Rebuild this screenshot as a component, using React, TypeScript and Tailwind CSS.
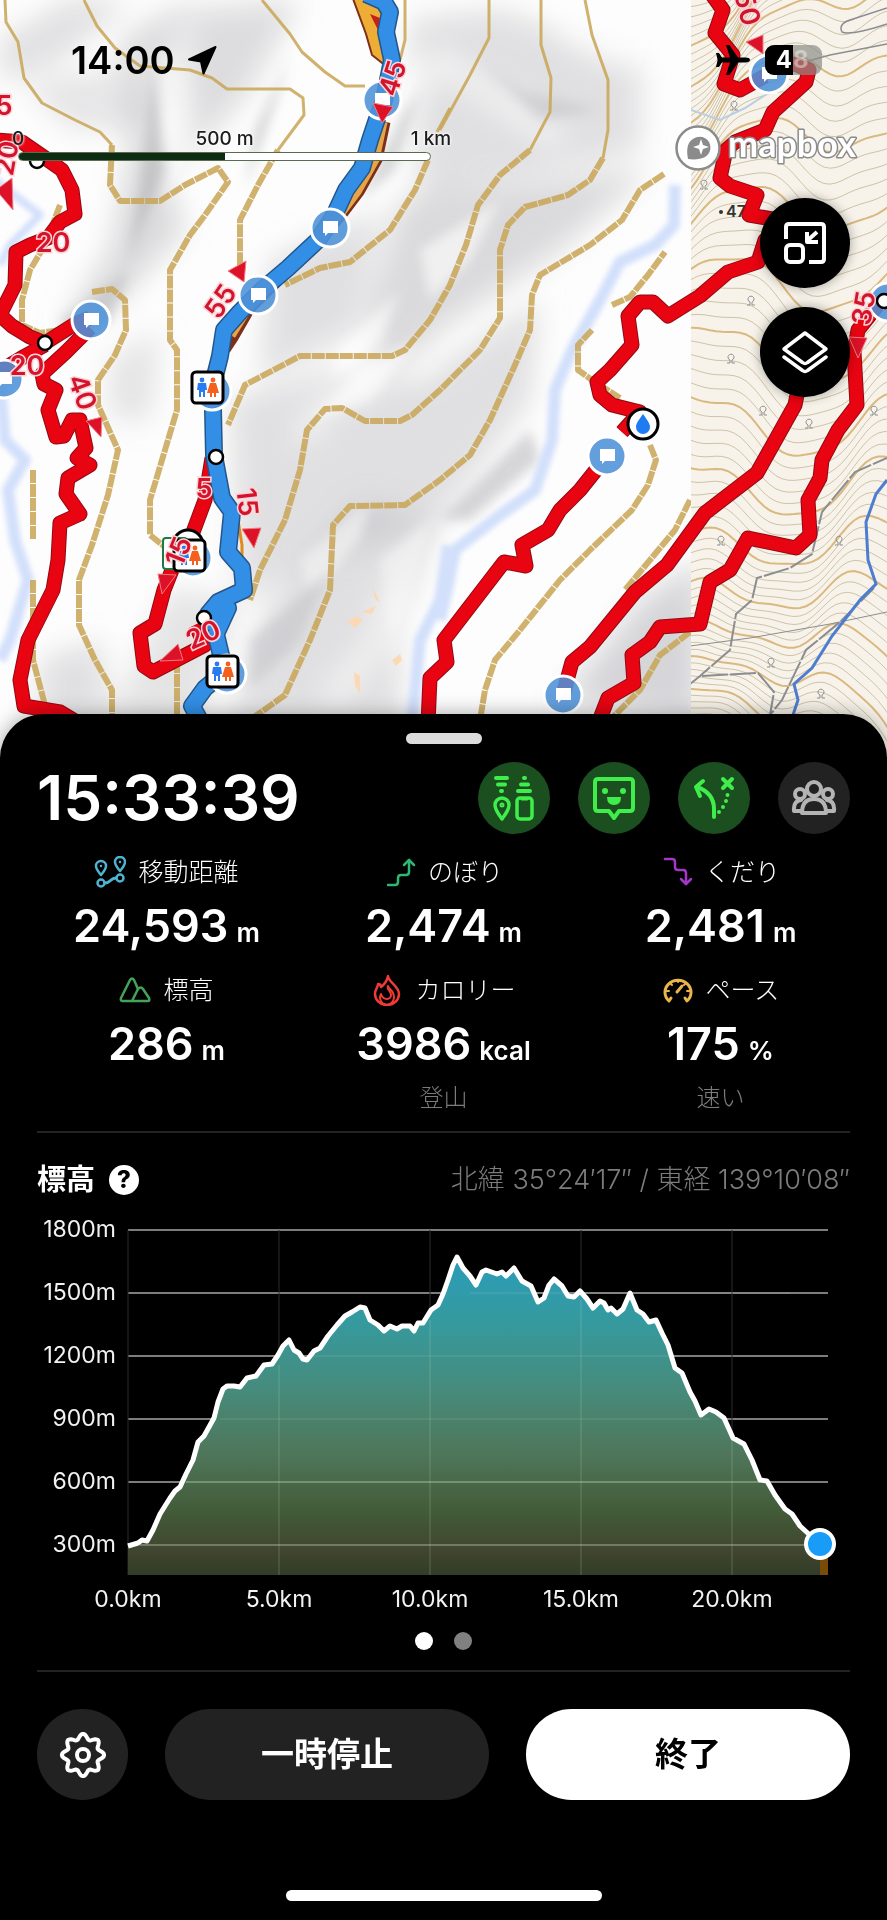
import React, { useState } from "react";

const RED = "#e90412";
const RED_EDGE = "#8f0a14";
const TAN = "#c8a455";

// ---------- map data ----------

const shades = [
  { d: "M120 40 L190 0 L150 130 L185 230 L120 300 L60 330 L110 250 L130 150 Z", o: 0.45 },
  { d: "M190 10 L300 0 L250 90 L180 170 Z", o: 0.4 },
  { d: "M410 20 L500 10 L640 60 L640 150 L560 170 L420 200 Z", o: 0.36 },
  { d: "M400 200 L560 180 L650 170 L560 250 L440 330 L380 400 L370 300 Z", o: 0.45 },
  { d: "M270 260 L380 210 L360 330 L260 380 Z", o: 0.35 },
  { d: "M230 400 L330 370 L420 380 L540 300 L530 400 L440 520 L330 560 L240 600 Z", o: 0.36 },
  { d: "M270 600 L360 500 L440 520 L400 620 L400 720 L230 720 Z", o: 0.36 },
  { d: "M170 590 L240 600 L200 720 L110 720 Z", o: 0.3 },
  { d: "M40 660 L100 640 L110 720 L40 720 Z", o: 0.35 },
  { d: "M560 700 L640 600 L700 560 L700 720 Z", o: 0.5 },
  { d: "M0 40 L70 0 L130 0 L60 60 L0 80 Z", o: 0.35 },
  { d: "M20 80 L120 70 L150 130 L70 130 Z", o: 0.25 },
  { d: "M110 360 L160 330 L150 420 L110 420 Z", o: 0.3 },
];

const ridges = [
  "M150 60 L185 120 L165 180",
  "M400 110 L440 60 L560 140",
  "M300 440 L330 400 L430 360",
  "M330 700 L380 640 L390 590",
  "M560 30 L620 60 L680 20",
];

// narrow folds drawn sharper than the broad shading
const folds = [
  { d: "M290 60 L255 130 L245 190 L262 140 Z", c: "#b4b4b8" },
  { d: "M152 60 L140 190 L128 260 L165 170 Z", c: "#b0b0b4" },
  { d: "M360 200 L400 120 L420 90 L395 170 Z", c: "#bcbcc0" },
  { d: "M480 60 L520 90 L600 110 L540 120 Z", c: "#c4c4c8" },
  { d: "M420 250 L500 200 L470 260 L430 300 Z", c: "#ffffff" },
  { d: "M340 350 L400 290 L380 340 L330 380 Z", c: "#ffffff" },
  { d: "M310 420 L360 370 L420 340 L370 400 Z", c: "#ffffff" },
  { d: "M440 520 L530 430 L540 460 L470 520 Z", c: "#bcbcc0" },
  { d: "M300 560 L370 500 L360 540 L310 600 Z", c: "#f8f8f8" },
  { d: "M250 640 L330 570 L300 640 L250 690 Z", c: "#c4c4c8" },
  { d: "M380 560 L430 520 L410 600 L390 640 Z", c: "#f8f8f8" },
  { d: "M60 320 L130 270 L110 320 L70 340 Z", c: "#b8b8bc" },
];

const thinContours = [
  "M5 0 L6 22 L18 42 L24 78 L42 103 L75 120 L100 132 L112 145",
  "M84 0 L97 26 L115 48 L140 66 L190 70 L212 78 L227 89 L290 89 L303 98 L304 115 L278 150",
  "M262 0 L290 34 L302 52 L325 72 L345 86 L365 86",
  "M405 0 L405 40 L400 60",
  "M489 0 L489 38 L470 75 L440 130",
  "M541 0 L541 45 L551 78 L550 112 L530 150",
  "M585 0 L592 35 L608 80 L608 130 L603 158",
  "M450 108 L437 132",
];

const thickContours = [
  "M112 145 L110 185 L120 201 L160 201 L185 185 L218 168 L228 182 L205 215 L190 235 L170 270 L170 340 L177 350 L177 410 L165 450 L150 500 L150 535 L175 555",
  "M278 150 L258 185 L240 220 L240 265",
  "M530 150 L500 175 L478 205 L466 245 L450 285 L430 320 L405 350 L392 356 L300 356 L245 385 L228 425",
  "M603 158 L590 180 L568 195 L525 207 L508 225 L500 250 L500 318 L480 350 L440 390 L412 415 L400 421 L365 421 L342 408 L325 409 L307 430 L300 470 L285 520 L260 570 L250 600",
  "M664 174 L640 190 L622 220 L590 245 L565 260 L540 275 L532 295 L530 330 L515 365 L490 420 L470 455 L440 480 L405 505 L350 506 L333 525 L330 590 L310 640 L285 695 L250 720",
  "M428 160 L415 190 L390 230 L350 262 L320 268 L285 285",
  "M612 305 L630 297 L648 275 L665 252",
  "M592 330 L578 345 L578 370 L592 380 L620 398",
  "M650 445 L656 460 L648 485 L632 510 L590 550 L560 580 L520 630 L495 660 L485 690 L480 720",
  "M690 500 L675 530 L650 560 L625 590",
  "M690 632 L660 655 L640 690 L610 720",
  "M60 205 L45 245 L30 270 L22 300 L22 325 L40 333 L60 330",
  "M92 292 L112 289 L125 300 L126 330 L115 355 L98 380 L98 405 L118 450 L108 495 L92 545 L79 580 L79 625 L95 660 L112 690 L112 720",
  "M33 470 L33 540",
  "M33 580 L33 660 L45 705",
  "M177 660 L177 720",
];

const streams = [
  { d: "M675 185 L674 225 L655 245 L620 262 L600 300 L572 350 L555 390 L552 440 L535 490 L500 515 L455 550 L447 590 L440 620", w: 12 },
  { d: "M448 545 L440 600 L420 640 L412 720", w: 12 },
  { d: "M-5 180 L40 215 L10 245 L0 265", w: 8 },
  { d: "M0 385 L5 440 L25 460 L8 490 L15 540 L28 580 L10 640 L0 660", w: 12 },
];

const trails = [
  "M-5 140 L22 142 L48 160 L62 170 L72 190 L75 214 L60 222 L48 238 L30 245 L16 252 L15 285 L0 315 L12 326 L30 337 L45 343 L75 324 L90 318",
  "M-5 374 L25 356 L45 345",
  "M90 328 L66 352 L42 374 L44 384 L56 390 L48 410 L56 437 L64 436 L72 420 L80 420 L86 448 L77 458 L90 465 L68 478 L66 494 L80 514 L60 523 L58 560 L53 590 L28 640 L20 680 L24 706 L60 712 L80 724",
  "M212 458 L205 500 L192 535",
  "M172 570 L164 590 L155 624 L140 633 L144 666 L153 672 L205 645 L195 625",
  "M710 -8 L723 10 L715 33 L733 55 L724 84 L740 90 L765 76",
  "M782 64 L795 64 L809 70 L806 82 L773 112 L765 130 L735 142 L726 150 L720 178 L730 186 L757 195 L749 215 L790 222 L765 240 L758 262 L728 272 L700 296 L668 316 L653 302 L640 302 L628 316 L632 345 L610 370 L597 382 L600 395 L612 405 L640 412 L622 432",
  "M596 470 L580 490 L560 510 L548 530 L522 545 L526 566 L504 562 L444 640 L447 662 L430 678 L428 724",
  "M800 380 L795 405 L757 473 L705 513 L667 565 L635 592 L590 647 L572 662 L563 695",
  "M882 300 L858 330 L854 352 L857 405 L838 430 L822 460 L820 478 L808 500 L810 535 L796 548 L748 538 L730 570 L710 582 L700 624 L660 627 L650 642 L632 655 L634 683 L608 698 L598 724",
];

const route =
  "M366 -6 L384 2 L390 12 L386 32 L392 60 L384 100 L376 122 L370 140 L362 168 L346 190 L334 216 L318 240 L288 268 L262 290 L240 312 L224 330 L220 356 L212 388 L213 410 L214 455 L222 498 L232 512 L228 552 L242 568 L244 590 L218 602 L208 614 L208 622 L228 608 L216 634 L225 672 L205 688 L192 706 L202 724";

const speechPins = [
  [382, 100], [330, 228], [258, 295], [91, 320], [212, 391], [193, 558],
  [227, 674], [769, 74], [607, 456], [563, 695], [4, 379], [888, 302],
];

const waypoints = [
  [37, 161], [45, 343], [216, 457], [204, 618], [884, 301],
];

const restrooms = [
  [207, 387], [189, 555], [222, 671],
];

const times = [
  { t: "45", x: 392, y: 78, r: -72 },
  { t: "55", x: 220, y: 301, r: -56 },
  { t: "20", x: 53, y: 242, r: 0 },
  { t: "5", x: 4, y: 105, r: 0 },
  { t: "20", x: 6, y: 158, r: -80 },
  { t: "20", x: 27, y: 365, r: 0 },
  { t: "40", x: 83, y: 392, r: 70 },
  { t: "5", x: 204, y: 488, r: 0 },
  { t: "15", x: 248, y: 502, r: 84 },
  { t: "15", x: 178, y: 551, r: -68 },
  { t: "20", x: 203, y: 634, r: -24 },
  { t: "50", x: 748, y: 8, r: 76 },
  { t: "35", x: 863, y: 308, r: -80 },
];

const arrows = [
  "373,103 393,107 382,123",
  "228,271 246,261 244,282",
  "86,421 102,417 101,437",
  "242,529 261,528 254,548",
  "158,574 176,575 162,594",
  "160,661 178,644 183,660",
  "746,42 763,35 763,54",
  "849,337 867,338 858,358",
  "-4,190 12,178 13,210",
];

const trees = [
  [733, 105], [730, 358], [762, 410], [808, 423], [703, 184], [720, 540],
  [838, 540], [770, 662], [820, 693], [750, 300], [873, 410],
];

// stacked wavy lines standing for the printed topo sheet
const topoLines = (() => {
  const out: { d: string; bold: boolean }[] = [];
  for (let i = 0; i < 104; i++) {
    const base = -150 + i * 10;
    let d = "";
    for (let x = 686; x <= 892; x += 6) {
      const u = x - 686;
      const y =
        base +
        Math.sin(u / 24 + i * 0.05) * 15 +
        Math.sin(u / 61 + i * 0.11) * 38 +
        Math.sin(u / 11 + i * 0.22) * 4 -
        u * 0.5 * Math.sin(i / 17);
      d += `${d ? "L" : "M"}${x} ${y.toFixed(1)}`;
    }
    out.push({ d, bold: i % 5 === 0 });
  }
  return out;
})();

const SpeechPin = ({ x, y }: { x: number; y: number }) => (
  <g>
    <circle cx={x} cy={y} r={19} fill="#4f92d8" fillOpacity={0.88} stroke="#fff" strokeWidth={3} />
    <path d={`M${x - 7} ${y - 7}h15v12h-10l-3 3v-3h-2z`} fill="#fff" />
  </g>
);

const Restroom = ({ x, y }: { x: number; y: number }) => (
  <g>
    <rect x={x - 15} y={y - 15} width={31} height={31} rx={4} fill="#fff" stroke="#000" strokeWidth={3} />
    <g fill="#2b7bf0">
      <circle cx={x - 5} cy={y - 7} r={2.4} />
      <path d={`M${x - 9} ${y - 4}h8l1 7h-2v7h-2v-5h-2v5h-2v-7h-2z`} />
    </g>
    <g fill="#f4601d">
      <circle cx={x + 6} cy={y - 7} r={2.4} />
      <path d={`M${x + 3} ${y - 4}h6l3 10h-3v4h-2v-4h-2v4h-2v-4h-3z`} />
    </g>
  </g>
);

const TrailMap = () => (
  <svg
    viewBox="0 0 887 760"
    preserveAspectRatio="xMidYMin slice"
    className="absolute inset-0 w-full h-full"
    role="img"
    aria-label="登山地図"
  >
    <defs>
      <filter id="soft" x="-20%" y="-20%" width="140%" height="140%">
        <feGaussianBlur stdDeviation="14" />
      </filter>
      <filter id="fold" x="-20%" y="-20%" width="140%" height="140%">
        <feGaussianBlur stdDeviation="6" />
      </filter>
      <filter id="water" x="-20%" y="-20%" width="140%" height="140%">
        <feGaussianBlur stdDeviation="2.5" />
      </filter>
      <clipPath id="sheet">
        <rect x="691" y="0" width="196" height="760" />
      </clipPath>
      <clipPath id="plain">
        <rect x="0" y="0" width="691" height="760" />
      </clipPath>
    </defs>

    <rect width="887" height="760" fill="#fdfdfd" />
    <g clipPath="url(#plain)">
      <g filter="url(#soft)">
        {shades.map((s) => (
          <path key={s.d} d={s.d} fill="#bdbdc1" opacity={s.o + 0.1} />
        ))}
        {ridges.map((d) => (
          <path key={d} d={d} fill="none" stroke="#fff" strokeWidth={14} opacity={0.8} />
        ))}
      </g>
      <g filter="url(#fold)" opacity={0.6}>
        {folds.map((f) => (
          <path key={f.d} d={f.d} fill={f.c} />
        ))}
      </g>
      <g fill="none" stroke="#d3e0fb" filter="url(#water)" strokeLinejoin="round">
        {streams.map((s) => (
          <path key={s.d} d={s.d} strokeWidth={s.w} />
        ))}
      </g>
      <g fill="none" stroke={TAN} strokeLinejoin="round">
        {thinContours.map((d) => (
          <path key={d} d={d} strokeWidth={3} opacity={0.85} />
        ))}
        {thickContours.map((d) => (
          <path key={d} d={d} strokeWidth={6} strokeDasharray="13 1" opacity={0.85} />
        ))}
      </g>
      <g fill="#fbd9b5">
        <path d="M347 622l10-6 6 4-8 8zM362 612l14-6-4 8zM372 588l4 6 4 8-5-3zM392 660l8-6 2 6-6 6zM354 672l6 4 0 18-5-8z" />
      </g>
    </g>

    {/* printed topo sheet on the right */}
    <g clipPath="url(#sheet)">
      <rect x="691" width="196" height="760" fill="#f7f3ea" />
      {topoLines.map((l) => (
        <path
          key={l.d}
          d={l.d}
          fill="none"
          stroke={l.bold ? "#dab981" : "#cfc4a8"}
          strokeWidth={l.bold ? 2 : 1}
        />
      ))}
      <g fill="none" stroke="#8b8d90" strokeWidth={2}>
        <path d="M887 8 L850 20 Q838 24 842 32 Q850 36 887 24" strokeWidth={1.5} />
        <path d="M887 44 L830 55 L790 66" strokeWidth={1.5} />
        <path d="M690 646 L750 638 L830 624 L887 612" strokeWidth={1} />
        <path d="M690 684 L700 676 L730 650 L736 614 L752 600 L757 578 L790 568 L812 554 L822 512 L855 472 L887 458" strokeDasharray="26 2" />
        <path d="M702 676 L758 673 L774 692 L770 715 L782 700 L806 650 L840 622 L874 588" strokeDasharray="26 2" />
      </g>
      <path d="M887 480 L876 494 L866 522 L868 560 L876 584 L860 600 L832 636 L812 668 L794 684 L798 700 L790 724" fill="none" stroke="#4e7dd0" strokeWidth={3} />
      <path d="M691 110 L720 120 L745 108 L770 92" fill="none" stroke="#b9cfe4" strokeWidth={2} />
      <g fill="none" stroke="#8f8f8f" strokeWidth={1}>
        {trees.map(([x, y]) => (
          <path key={`${x}-${y}`} d={`M${x - 3} ${y + 5}h3v-3a3 3 0 1 1 2 0v3h3`} />
        ))}
      </g>
      <circle cx="721" cy="212" r="2" fill="#333" />
      <text x="726" y="217" fontSize="16" fontWeight="600" fill="#333">47</text>
    </g>

    <g fill="none" strokeLinejoin="round">
      {trails.map((d) => (
        <path key={d} d={d} stroke={RED_EDGE} strokeWidth={15} />
      ))}
      {trails.map((d) => (
        <path key={d} d={d} stroke={RED} strokeWidth={13} />
      ))}
    </g>

    {/* planned course under the walked track */}
    <path d="M352 -4 L366 34 L372 55 L386 66 L382 -4 Z" fill="#eeae35" stroke="#7d3018" strokeWidth={2} />
    <path d="M370 14 L380 18 L378 30 Z" fill="#c22218" />
    <path
      d="M386 122 L378 160 L360 192 L342 216 L318 244 L280 280 L250 310 L234 338 L226 350"
      fill="none"
      stroke="#7d3018"
      strokeWidth={9}
    />
    <path
      d="M384 122 L376 160 L358 192 L340 216 L316 244 L278 280 L248 310 L232 336"
      fill="none"
      stroke="#e8a548"
      strokeWidth={7}
    />
    <path d="M238 520 L242 545 L242 562" fill="none" stroke="#e08a1c" strokeWidth={3} />
    <path d={route} fill="none" stroke="#22568c" strokeWidth={18} strokeLinejoin="round" />
    <path d={route} fill="none" stroke="#338fe6" strokeWidth={15} strokeLinejoin="round" />

    {speechPins.map(([x, y]) => (
      <SpeechPin key={`${x}-${y}`} x={x} y={y} />
    ))}
    {waypoints.map(([x, y]) => (
      <circle key={`${x}-${y}`} cx={x} cy={y} r={7} fill="#fff" stroke="#000" strokeWidth={2.5} />
    ))}
    <circle cx={188} cy={545} r={15} fill="#fff" stroke="#000" strokeWidth={3} />
    <rect x={163} y={538} width={24} height={31} rx={3} fill="#fff" stroke="#1d7a45" strokeWidth={2} />
    {restrooms.map(([x, y]) => (
      <Restroom key={`${x}-${y}`} x={x} y={y} />
    ))}
    <circle cx={643} cy={424} r={15} fill="#fff" stroke="#000" strokeWidth={3} />
    <path d="M643 414c4 6 7 9 7 13a7 7 0 0 1-14 0c0-4 3-7 7-13z" fill="#1f7bf2" />

    {arrows.map((p) => (
      <polygon key={p} points={p} fill="#dc1228" stroke="#f27c84" strokeWidth={1} />
    ))}
    <g fontSize={27} fontWeight={600} textAnchor="middle" fill="#d4142c" stroke="#fbd5d8" strokeWidth={3} paintOrder="stroke">
      {times.map((m) => (
        <text key={`${m.t}-${m.x}-${m.y}`} x={m.x} y={m.y + 10} transform={`rotate(${m.r} ${m.x} ${m.y})`}>
          {m.t}
        </text>
      ))}
    </g>
  </svg>
);

const StatusBar = () => (
  <div className="flex h-11 items-center justify-between pl-[71px] pr-[65px]">
    <div className="flex items-center gap-3 text-black">
      <span className="text-[38px] leading-[44px] font-semibold">14:00</span>
      <svg viewBox="0 0 30 30" className="w-[30px] h-[30px]" fill="#000" stroke="#000" strokeWidth="2" strokeLinejoin="round">
        <path d="M2 14.500L28.500 2 16.500 28.500 14 16.500z" />
      </svg>
    </div>
    <div className="flex items-center gap-[14px]">
      <svg viewBox="0 0 36 32" className="w-9 h-8" fill="#000">
        <path d="M35 16c0-1.600-2-2.400-4.500-2.400H23L14.500 1H11l4 12.600H7L4 9H1l1.600 7L1 23h3l3-4.600h8L11 31h3.500L23 18.400h7.500C33 18.400 35 17.600 35 16z" />
      </svg>
      <div className="flex h-[30px] w-[57px] overflow-hidden rounded-[9px] bg-[#8c8c86]/70 text-[24px] leading-[30px] font-bold">
        <span className="w-7 bg-black pr-[1px] text-right text-white">4</span>
        <span className="text-white/40">8</span>
      </div>
    </div>
  </div>
);

const ScaleBar = () => (
  <div className="ml-[18px] w-[413px] [text-shadow:0_0_3px_#fff,0_0_3px_#fff]">
    <div className="flex justify-between text-[19px] leading-6 font-medium text-[#1c1c1c] whitespace-nowrap">
      <span className="flex w-0 justify-center">0</span>
      <span className="flex w-0 justify-center">500 m</span>
      <span className="flex w-0 justify-center">1 km</span>
    </div>
    <div className="mt-[1px] h-[9px] rounded-full border border-[#5b6b4f] bg-white">
      <div className="h-full w-1/2 rounded-l-full bg-[#0e2c12]" />
    </div>
  </div>
);

const MapboxLogo = () => (
  <a href="#mapbox" className="mr-5 flex items-center gap-1" aria-label="mapbox">
    <svg viewBox="0 0 46 46" className="w-[46px] h-[46px]">
      <circle cx="23" cy="23" r="21.500" fill="#fff" stroke="#8b8b8b" strokeWidth="2.500" />
      <path d="M13 34c-2-11 0-17 5-20 6-4 13-2 16 3 3 6 1 12-4 15-4 2-10 3-17 2z" fill="#8b8b8b" />
      <path d="M26 14l2 6 6 2-6 2-2 6-2-6-6-2 6-2z" fill="#fff" />
    </svg>
    <svg viewBox="0 0 142 50" className="h-[50px] w-[142px]">
      <text x="3" y="34" fontSize="36" fontWeight="700" fill="#fff" stroke="#8b8b8b" strokeWidth="3" paintOrder="stroke" strokeLinejoin="round" className="font-['Lato',sans-serif]">
        mapbox
      </text>
    </svg>
  </a>
);

const roundButton =
  "flex h-[90px] w-[90px] items-center justify-center rounded-full bg-black text-white shadow-[0_0_12px_rgba(0,0,0,0.35)]";

const MapButtons = () => (
  <div className="mt-[25px] flex flex-col items-end gap-[19px] pr-[37px]">
    <button type="button" aria-label="縮小表示" className={roundButton}>
      <svg viewBox="0 0 44 44" className="w-11 h-11" fill="none" stroke="currentColor" strokeWidth="4" strokeLinejoin="round">
        <path d="M3 18V6q0-3 3-3h32q3 0 3 3v32q0 3-3 3H26" />
        <rect x="3" y="24" width="17" height="17" rx="4" />
        <path d="M34 11l-9 8" />
        <path d="M24 11v10h11" />
      </svg>
    </button>
    <button type="button" aria-label="レイヤー" className={roundButton}>
      <svg viewBox="0 0 48 44" className="w-12 h-11" fill="none" stroke="currentColor" strokeWidth="3.500" strokeLinejoin="round" strokeLinecap="round">
        <path d="M24 3l21 16-18.500 13.500q-2.500 2-5 0L3 19z" />
        <path d="M3 27l18.500 13.500q2.500 2 5 0L45 27" />
      </svg>
    </button>
  </div>
);

// ---------- sheet ----------

const BeaconIcon = () => (
  <svg viewBox="0 0 44 48" className="w-11 h-12" fill="none" stroke="currentColor" strokeWidth="4" strokeLinecap="round" strokeLinejoin="round">
    <path d="M4 4h11M6 10.500h7M9 17h1M32 4h1M29 10.500h7M26 17h12" />
    <path d="M10 45c-4-6-7-9-7-14a7 7 0 0 1 14 0c0 5-3 8-7 14z" strokeWidth="3.500" />
    <circle cx="10" cy="31" r="1.500" strokeWidth="2" />
    <rect x="25" y="24" width="15" height="21" rx="3" strokeWidth="3.500" />
    <path d="M30 25h5" strokeWidth="3" />
  </svg>
);

const SmileIcon = () => (
  <svg viewBox="0 0 44 46" className="w-11 h-[46px]" fill="none" stroke="currentColor" strokeWidth="4" strokeLinecap="round" strokeLinejoin="round">
    <path d="M6 4h32q3 0 3 3v26q0 3-3 3H27l-5 7-5-7H6q-3 0-3-3V7q0-3 3-3z" />
    <circle cx="13" cy="16" r="3" fill="currentColor" stroke="none" />
    <circle cx="31" cy="16" r="3" fill="currentColor" stroke="none" />
    <path d="M15 22h14q0 8-7 8t-7-8z" fill="currentColor" stroke="none" />
  </svg>
);

const CourseIcon = () => (
  <svg viewBox="0 0 44 46" className="w-11 h-[46px]" fill="none" stroke="currentColor" strokeWidth="4" strokeLinecap="round" strokeLinejoin="round">
    <path d="M22 42V34q0-16-17-22" />
    <path d="M11 6l-7 6 4 9" />
    <path d="M31 4l9 9M40 4l-9 9" />
    <path d="M35.500 20v0M34 26v0M31 32v0M27 37v0" />
  </svg>
);

const GroupIcon = () => (
  <svg viewBox="0 0 46 36" className="w-[46px] h-9" fill="none" stroke="currentColor" strokeWidth="4" strokeLinecap="round" strokeLinejoin="round">
    <circle cx="9" cy="14" r="5" />
    <circle cx="37" cy="14" r="5" />
    <path d="M10 31H3q-1-10 7-11M36 31h7q1-10-7-11" />
    <circle cx="23" cy="9" r="7" />
    <path d="M11 33q0-14 12-14t12 14z" />
  </svg>
);

const RouteIcon = () => (
  <svg viewBox="0 0 32 32" className="w-8 h-8 text-[#4fb3cf]" fill="none" stroke="currentColor" strokeWidth="2.500" strokeLinecap="round" strokeLinejoin="round">
    <path d="M7 19c-3-4-5-6-5-9a5 5 0 0 1 10 0c0 3-2 5-5 9zM26 15c-3-4-5-6-5-9a5 5 0 0 1 10 0c0 3-2 5-5 9z" />
    <path d="M7 10v0M26 6v0" />
    <circle cx="7" cy="27" r="3.500" />
    <circle cx="26" cy="22" r="3.500" />
    <path d="M11 27c6 0 5-5 11-5" strokeWidth="3" />
  </svg>
);

const ClimbIcon = () => (
  <svg viewBox="0 0 32 32" className="w-8 h-8 text-[#2fb673]" fill="none" stroke="currentColor" strokeWidth="2.500" strokeLinecap="round" strokeLinejoin="round">
    <path d="M4 29h7q3 0 3-3v-4q0-3 3-3h5q3 0 3-3V4" />
    <path d="M20 9l5-5 5 5" />
  </svg>
);

const DescentIcon = () => (
  <svg viewBox="0 0 32 32" className="w-8 h-8 text-[#a436c8]" fill="none" stroke="currentColor" strokeWidth="2.500" strokeLinecap="round" strokeLinejoin="round">
    <path d="M4 3h7q3 0 3 3v5q0 3 3 3h5q3 0 3 3v11" />
    <path d="M20 23l5 5 5-5" />
  </svg>
);

const MountainIcon = () => (
  <svg viewBox="0 0 32 32" className="w-8 h-8 text-[#43a35b]" fill="none" stroke="currentColor" strokeWidth="2.500" strokeLinecap="round" strokeLinejoin="round">
    <path d="M4 27q-3 0-2-3L11 6q2-3 4 0l4 9q3-3 5 0l6 9q1 3-1 3z" />
    <path d="M19 15l-6 12" />
  </svg>
);

const FlameIcon = () => (
  <svg viewBox="0 0 32 32" className="w-8 h-8 text-[#f03a36]" fill="none" stroke="currentColor" strokeWidth="2.500" strokeLinecap="round" strokeLinejoin="round">
    <path d="M17 2c0 6 11 10 11 18a12 11 0 0 1-24 0c0-5 3-6 3-10 2 0 3 1 3 3 4-3 6-6 7-11z" />
    <path d="M17 12c-2 3 3 5 3 9a4 4 0 0 1-4 4c-3 0-5-2-6-5-3 6 2 11 6 11s9-5 6-12c-1-3-4-4-5-7z" strokeWidth="2" />
  </svg>
);

const GaugeIcon = () => (
  <svg viewBox="0 0 32 32" className="w-8 h-8 text-[#eab54a]" fill="none" stroke="currentColor" strokeWidth="3" strokeLinecap="round" strokeLinejoin="round">
    <path d="M7 27a13 12 0 1 1 18 0l-2-3M7 27l2-3" />
    <path d="M15 18l5-6" />
    <path d="M4 17h3M28 17h-3M8 9l2 2M24 9l-2 2M16 6v2" strokeWidth="2" />
  </svg>
);

const toggles = [
  { label: "みまもり", icon: BeaconIcon, on: true },
  { label: "あいさつ", icon: SmileIcon, on: true },
  { label: "ルート外れ警告", icon: CourseIcon, on: true },
  { label: "グループ", icon: GroupIcon, on: false },
];

const stats = [
  { icon: RouteIcon, label: "移動距離", value: "24,593", unit: "m" },
  { icon: ClimbIcon, label: "のぼり", value: "2,474", unit: "m" },
  { icon: DescentIcon, label: "くだり", value: "2,481", unit: "m" },
  { icon: MountainIcon, label: "標高", value: "286", unit: "m" },
  { icon: FlameIcon, label: "カロリー", value: "3986", unit: "kcal", note: "登山" },
  { icon: GaugeIcon, label: "ペース", value: "175", unit: "%", note: "速い" },
];

const profile =
  "128,1546 138,1543 142,1540 147,1541 153,1530 160,1514 170,1498 175,1491 180,1487 186,1474 193,1460 198,1442 204,1436 214,1418 218,1402 223,1389 227,1386 234,1386 240,1387 247,1378 256,1376 264,1365 272,1364 278,1355 283,1346 289,1340 294,1350 299,1353 303,1359 307,1360 314,1351 320,1348 328,1336 337,1325 345,1316 352,1312 360,1307 365,1308 370,1320 378,1325 384,1331 390,1326 397,1329 402,1326 410,1326 414,1331 418,1323 423,1323 431,1310 438,1305 443,1294 448,1280 453,1265 457,1257 463,1268 470,1276 476,1285 482,1272 486,1270 497,1274 502,1272 506,1276 514,1268 522,1281 531,1286 538,1302 544,1298 549,1285 554,1279 562,1286 568,1296 574,1297 580,1291 587,1299 593,1308 600,1301 604,1303 608,1310 611,1308 617,1314 623,1309 630,1293 637,1310 643,1314 649,1322 656,1320 662,1333 668,1345 675,1368 682,1373 690,1392 695,1401 701,1415 709,1409 716,1412 724,1418 733,1438 744,1444 752,1460 760,1480 767,1481 775,1495 785,1509 792,1514 800,1526 812,1537 820,1543";

const ElevationChart = () => (
  <svg viewBox="37 1214 813 400" className="block w-full" role="img" aria-label="標高グラフ">
    <defs>
      <linearGradient id="terrain" gradientUnits="userSpaceOnUse" x1="0" x2="0" y1="1257" y2="1575">
        <stop offset="0" stopColor="#2a9cba" />
        <stop offset="0.2" stopColor="#359a9f" />
        <stop offset="0.42" stopColor="#468b7b" />
        <stop offset="0.62" stopColor="#4f765a" />
        <stop offset="0.8" stopColor="#425b38" />
        <stop offset="0.92" stopColor="#414630" />
        <stop offset="1" stopColor="#323c26" />
      </linearGradient>
    </defs>
    <g stroke="#7c7c7c" strokeWidth="2">
      {[0, 1, 2, 3, 4, 5].map((i) => (
        <path key={i} d={`M128 ${1230 + i * 63}H828`} />
      ))}
    </g>
    <g stroke="#2c2c2c" strokeWidth="1">
      {[0, 1, 2, 3, 4].map((i) => (
        <path key={i} d={`M${128 + i * 151} 1230V1575`} />
      ))}
    </g>
    <polygon points={`128,1575 ${profile} 820,1575`} fill="url(#terrain)" />
    <rect x="820" y="1546" width="8" height="29" fill="#7a4a08" />
    <g stroke="#c8e0c0" strokeOpacity="0.35" strokeWidth="1">
      <path d="M470 1293H790M310 1356H680M220 1419H710" strokeOpacity="0.2" />
      <path d="M186 1482H760M140 1545H820" strokeWidth="2" />
      <path d="M279 1365V1575M430 1320V1575M581 1300V1575M732 1440V1575" strokeOpacity="0.25" />
    </g>
    <polyline points={profile} fill="none" stroke="#fff" strokeWidth="5" strokeLinejoin="round" />
    <circle cx="820" cy="1544" r="14" fill="#189cf8" stroke="#fff" strokeWidth="4" />
    <g fontSize="23" fill="#f2f2f2">
      {[1800, 1500, 1200, 900, 600, 300].map((m, i) => (
        <text key={m} x="116" y={1237 + i * 63} textAnchor="end">
          {m}m
        </text>
      ))}
      {["0.0", "5.0", "10.0", "15.0", "20.0"].map((km, i) => (
        <text key={km} x={128 + i * 151} y="1607" textAnchor="middle">
          {km}km
        </text>
      ))}
    </g>
  </svg>
);

// eight rounded teeth around the hub
const gearPath = Array.from({ length: 96 }, (_, i) => {
  const a = (i / 96) * Math.PI * 2;
  const r = 18.5 + 2.6 * Math.cos(8 * a);
  return `${i ? "L" : "M"}${(24 + r * Math.sin(a)).toFixed(2)} ${(24 - r * Math.cos(a)).toFixed(2)}`;
}).join("");

const GearIcon = () => (
  <svg viewBox="0 0 48 48" className="w-12 h-12" fill="none" stroke="currentColor" strokeWidth="4" strokeLinejoin="round">
    <path d={`${gearPath}Z`} />
    <circle cx="24" cy="24" r="6" />
  </svg>
);

const App = () => {
  const [page, setPage] = useState(0);

  return (
    <main className="flex min-h-screen flex-col bg-black font-['Inter','Noto_Sans_CJK_JP',sans-serif] text-white">
      <section className="relative h-[758px] overflow-hidden pt-[38px]">
        <TrailMap />
        <div className="relative">
          <StatusBar />
          <div className="mt-[41px] flex items-start justify-between">
            <div className="pt-1">
              <ScaleBar />
            </div>
            <MapboxLogo />
          </div>
          <MapButtons />
        </div>
      </section>

      <section className="relative -mt-11 flex grow flex-col rounded-t-[44px] bg-black px-[37px] pt-[19px] shadow-[0_0_20px_rgba(0,0,0,0.35)]">
        <div className="h-[11px] w-[76px] self-center rounded-full bg-[#dcdcdc]" />

        <div className="mt-[18px] flex items-center justify-between">
          <h1 className="text-[62px] leading-[72px] font-semibold">15:33:39</h1>
          <div className="flex gap-7">
            {toggles.map((item) => (
              <button
                key={item.label}
                type="button"
                aria-label={item.label}
                aria-pressed={item.on}
                className={`flex h-[72px] w-[72px] items-center justify-center rounded-full ${
                  item.on ? "bg-[#1b4f1f] text-[#3fee4b]" : "bg-[#222222] text-[#b4b4b4]"
                }`}
              >
                <item.icon />
              </button>
            ))}
          </div>
        </div>

        <dl className="-mx-[9px] mt-5 grid grid-cols-3 gap-y-[13px]">
          {stats.map((s) => (
            <div key={s.label} className="flex flex-col items-center">
              <dt className="flex items-center gap-3 text-[25px] leading-9 font-light">
                <s.icon />
                {s.label}
              </dt>
              <dd className="mt-[3px] flex items-baseline gap-2 font-semibold">
                <span className="text-[45px] leading-[66px]">{s.value}</span>
                <span className="text-[26px]">{s.unit}</span>
              </dd>
              {s.note && <dd className="mt-[3px] text-[24px] leading-9 font-light text-[#7c7c7c]">{s.note}</dd>}
            </div>
          ))}
        </dl>

        <hr className="mt-[15px] border-t-2 border-[#232323]" />

        <div className="mt-[27px] flex items-center justify-between">
          <h2 className="flex items-center gap-[14px] text-[29px] leading-10 font-bold">
            標高
            <button
              type="button"
              aria-label="ヘルプ"
              className="flex h-[30px] w-[30px] items-center justify-center rounded-full bg-white text-[24px] leading-none font-extrabold text-black"
            >
              ?
            </button>
          </h2>
          <p className="text-[27px] leading-10 font-light text-[#7c7c7c]">北緯 35°24′17″ / 東経 139°10′08″</p>
        </div>

        <div className="mt-[14px]">
          <ElevationChart />
        </div>

        <div className="mt-[18px] flex justify-center gap-[21px]">
          {[0, 1].map((i) => (
            <button
              key={i}
              type="button"
              aria-label={`ページ ${i + 1}`}
              onClick={() => setPage(i)}
              className={`h-[18px] w-[18px] rounded-full ${page === i ? "bg-white" : "bg-[#808080]"}`}
            />
          ))}
        </div>

        <hr className="mt-5 border-t-2 border-[#232323]" />

        <div className="mt-[37px] flex gap-[37px] text-[33px] font-bold">
          <button type="button" aria-label="設定" className="flex h-[91px] w-[91px] items-center justify-center rounded-full bg-[#222222]">
            <GearIcon />
          </button>
          <button type="button" className="h-[91px] flex-1 rounded-full bg-[#222222]">
            一時停止
          </button>
          <button type="button" className="h-[91px] flex-1 rounded-full bg-white text-black">
            終了
          </button>
        </div>

        <div className="mt-auto mb-[19px] h-[11px] w-[316px] self-center rounded-full bg-white" />
      </section>
    </main>
  );
};

export default App;
